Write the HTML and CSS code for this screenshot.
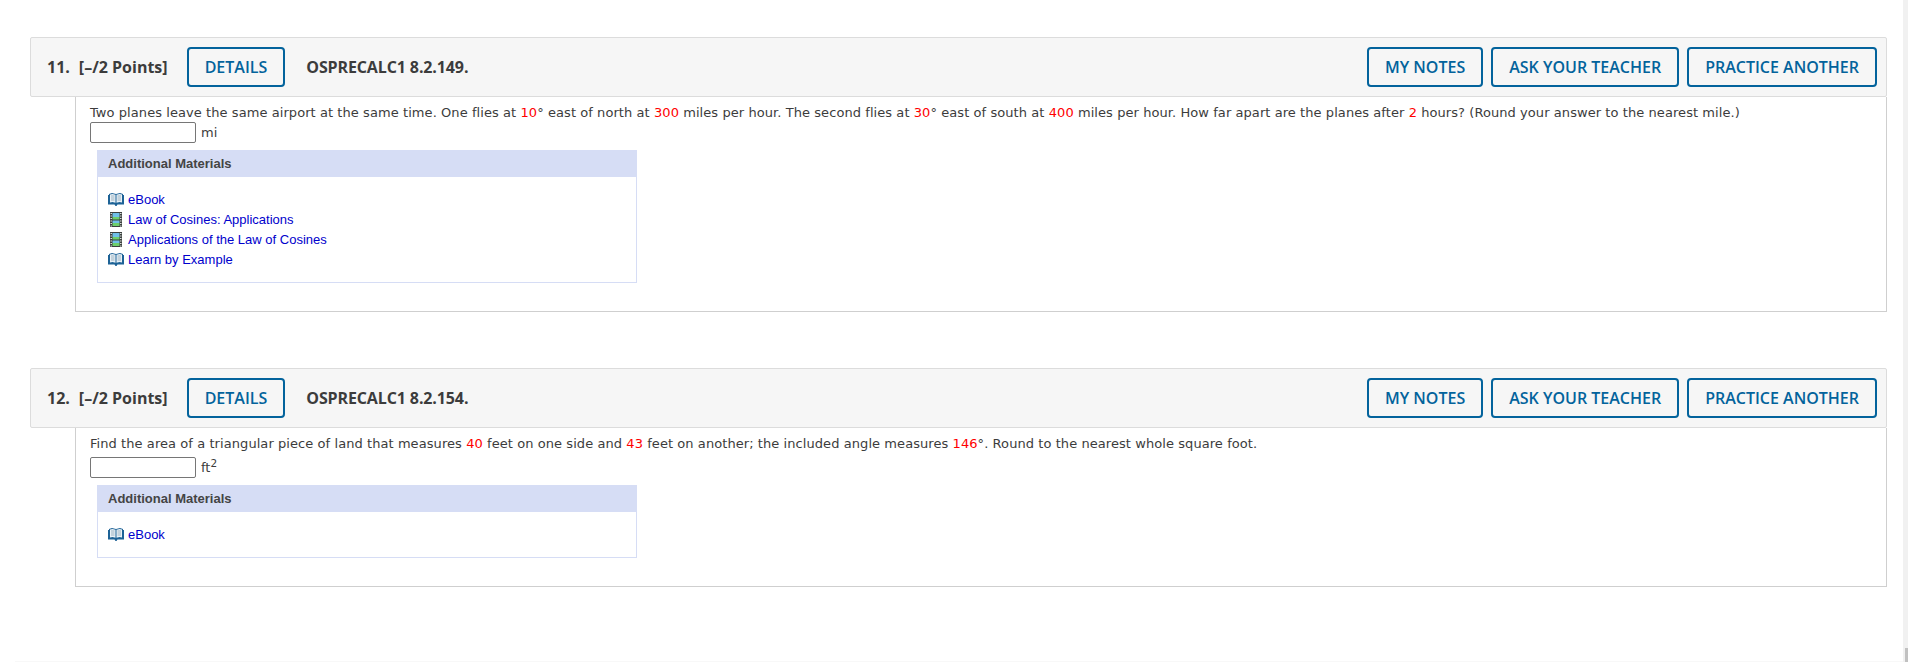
FILE: index.html
```html
<!DOCTYPE html>
<html lang="en">
<head>
<meta charset="utf-8">
<title>Questions</title>
<link rel="stylesheet" href="styles.css">
</head>
<body>
<svg class="defs" width="0" height="0" aria-hidden="true">
  <symbol id="book" viewBox="0 0 16 13">
    <path d="M0 2h1V1l3-1 4 1 4-1 3 1v1h1v9.500H9.500L8.500 13h-1l-1-1.500H0z" fill="#1d6296"/>
    <path d="M2 1.500l2.500-.5 3 .7V9.800L4.500 9 2 9.500zM14 1.500l-2.500-.5-3 .7V9.800L11.500 9l2.500.5z" fill="#e9f1f6"/>
    <path d="M3 3h3.500M3 5h3.500M3 7h3.500M9.500 3H13M9.500 5H13M9.500 7H13" stroke="#9db2c1"/>
  </symbol>
  <symbol id="film" viewBox="0 0 12 15">
    <rect width="12" height="15" fill="#3b403e"/>
    <path d="M.5 1.500h1.500M.5 4h1.500M.5 6.500h1.500M.5 9h1.500M.5 11.500h1.500M.5 14h1.500M10 1.500h1.500M10 4h1.500M10 6.500h1.500M10 9h1.500M10 11.500h1.500M10 14h1.500" stroke="#d8dedb"/>
    <rect x="2.500" y="1" width="7" height="4" fill="#6fc0e8"/>
    <rect x="2.500" y="5" width="7" height="2.500" fill="#6ccf6c"/>
    <rect x="2.500" y="8.500" width="7" height="2.500" fill="#6fc0e8"/>
    <rect x="2.500" y="11" width="7" height="3" fill="#6ccf6c"/>
  </symbol>
</svg>

<main class="page">
  <section class="question">
    <header class="bar">
      <span class="num">11.</span>
      <span class="points">[&ndash;/2 Points]</span>
      <a class="btn">DETAILS</a>
      <span class="code">OSPRECALC1 8.2.149.</span>
      <div class="actions">
        <a class="btn">MY NOTES</a>
        <a class="btn">ASK YOUR TEACHER</a>
        <a class="btn">PRACTICE ANOTHER</a>
      </div>
    </header>
    <div class="body">
      <p class="prompt">Two planes leave the same airport at the same time. One flies at <span class="v">10</span>&deg; east of north at <span class="v">300</span> miles per hour. The second flies at <span class="v">30</span>&deg; east of south at <span class="v">400</span> miles per hour. How far apart are the planes after <span class="v">2</span> hours? (Round your answer to the nearest mile.)</p>
      <div class="answer"><input class="field" type="text" aria-label="answer"><span class="unit">mi</span></div>
      <div class="materials">
        <div class="mat-title">Additional Materials</div>
        <ul class="mat-list">
          <li><svg class="ico-book"><use href="#book"/></svg><a>eBook</a></li>
          <li><svg class="ico-film"><use href="#film"/></svg><a>Law of Cosines: Applications</a></li>
          <li><svg class="ico-film"><use href="#film"/></svg><a>Applications of the Law of Cosines</a></li>
          <li><svg class="ico-book"><use href="#book"/></svg><a>Learn by Example</a></li>
        </ul>
      </div>
    </div>
  </section>

  <section class="question second">
    <header class="bar">
      <span class="num">12.</span>
      <span class="points">[&ndash;/2 Points]</span>
      <a class="btn">DETAILS</a>
      <span class="code">OSPRECALC1 8.2.154.</span>
      <div class="actions">
        <a class="btn">MY NOTES</a>
        <a class="btn">ASK YOUR TEACHER</a>
        <a class="btn">PRACTICE ANOTHER</a>
      </div>
    </header>
    <div class="body">
      <p class="prompt">Find the area of a triangular piece of land that measures <span class="v">40</span> feet on one side and <span class="v">43</span> feet on another; the included angle measures <span class="v">146</span>&deg;. Round to the nearest whole square foot.</p>
      <div class="answer tall"><input class="field" type="text" aria-label="answer"><span class="unit">ft<sup>2</sup></span></div>
      <div class="materials">
        <div class="mat-title">Additional Materials</div>
        <ul class="mat-list">
          <li><svg class="ico-book"><use href="#book"/></svg><a>eBook</a></li>
        </ul>
      </div>
    </div>
  </section>
  <div class="fold"></div>
</main>
<aside class="scrollbar"><div class="thumb"></div></aside>
</body>
</html>
```
FILE: styles.css
```css
* { box-sizing: border-box; }
html, body { margin: 0; height: 100%; background: #fff; overflow: hidden; }
body { display: flex; color: #3c3c3c; font-family: "DejaVu Sans", Verdana, sans-serif; }
.defs { position: absolute; }
.page { flex: 1; display: flex; flex-direction: column; padding: 37px 16px 0 30px; min-width: 0; }
.question { display: flex; flex-direction: column; }
.second { margin-top: 56px; }
.fold { height: 1px; margin: auto -16px 0 -15px; background: #f8f8f8; }
.scrollbar { width: 5px; display: flex; flex-direction: column; justify-content: flex-end; align-items: flex-end; background: #f1f1f1; }
.thumb { width: 3px; height: 14px; background: #c1c1c1; }
.bar {
  display: flex; align-items: center; height: 60px; padding: 0 9px 0 16px;
  background: #f6f6f6; border: 1px solid #dcdcdc; border-radius: 2px;
  font-family: "Open Sans", sans-serif; font-weight: 600; font-size: 16px;
}
.num { margin-right: 9px; font-weight: 700; }
.points { margin-right: 19px; font-weight: 700; }
.code { margin-left: 21px; font-weight: 700; letter-spacing: -.12px; }
.btn {
  display: flex; align-items: center; justify-content: center; height: 40px; padding: 0 16px;
  border: 2px solid #03639c; border-radius: 4px; color: #03639c; font-weight: 600;
}
.actions { display: flex; gap: 8px; margin-left: auto; }
.body {
  margin-left: 45px; padding: 8px 0 28px 14px;
  border: solid #cfcfcf; border-width: 0 1px 1px 1px;
}
.prompt { margin: 0; font-size: 13px; line-height: 15px; letter-spacing: .07px; }
.v { color: #f00; }
.answer { display: flex; align-items: center; height: 21px; margin-top: 2px; }
.answer.tall { margin-top: 6px; }
.field { width: 106px; height: 21px; margin: 0; padding: 0; border: 1px solid #767676; border-radius: 2px; background: #fff; }
.unit { margin-left: 5px; font-size: 13px; }
.unit sup { font-size: 10.5px; line-height: 0; }
.materials { width: 540px; margin: 7px 0 0 7px; border: 1px solid #d6ddf5; font-family: "Liberation Sans", Arial, sans-serif; font-size: 13px; }
.mat-title { height: 27px; padding-left: 11px; line-height: 27px; margin: -1px -1px 0; background: #d6ddf5; font-weight: 700; color: #444; }
.mat-list { list-style: none; margin: 0; padding: 12px 0 13px 10px; }
.mat-list li { display: flex; align-items: center; height: 20px; }
.mat-list a { color: #0000cc; margin-left: 4px; }
.ico-book { width: 16px; height: 13px; }
.ico-film { width: 12px; height: 15px; margin: 0 2px; }
```
